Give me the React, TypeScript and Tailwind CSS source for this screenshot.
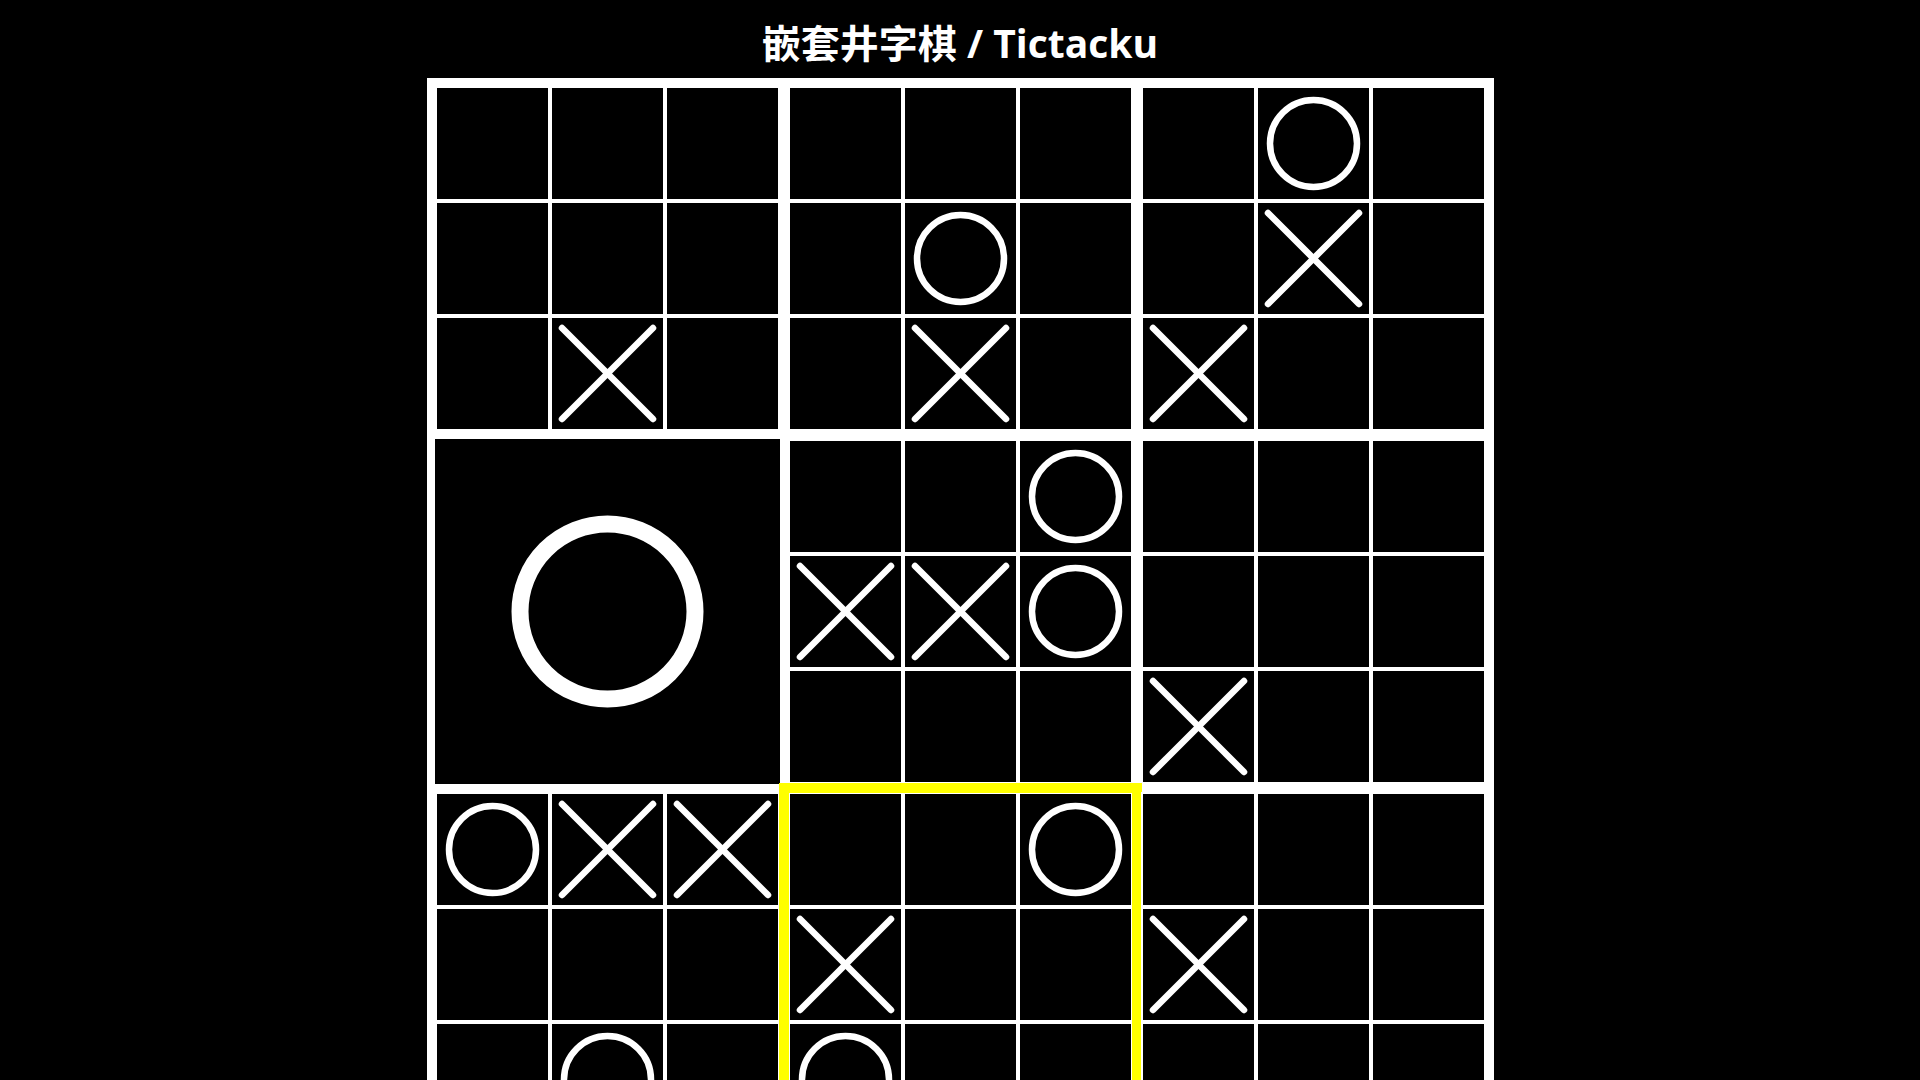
import React from "react";

type Mark = "" | "X" | "O";
type Mini = { won?: Mark; cells: Mark[]; active?: boolean };

const boards: Mini[] = [
  { cells: ["", "", "", "", "", "", "", "X", ""] },
  { cells: ["", "", "", "", "O", "", "", "X", ""] },
  { cells: ["", "O", "", "", "X", "", "X", "", ""] },
  { won: "O", cells: ["", "", "", "", "", "", "", "", ""] },
  { cells: ["", "", "O", "X", "X", "O", "", "", ""] },
  { cells: ["", "", "", "", "", "", "X", "", ""] },
  { cells: ["O", "X", "X", "", "", "", "", "O", ""] },
  { cells: ["", "", "O", "X", "", "", "O", "", ""], active: true },
  { cells: ["", "", "", "X", "", "", "", "", ""] },
];

function XMark() {
  return (
    <svg width="111" height="111" viewBox="0 0 111 111" className="block">
      <line x1="10" y1="10" x2="101" y2="101" stroke="#fff" strokeWidth="6.5" strokeLinecap="round" />
      <line x1="101" y1="10" x2="10" y2="101" stroke="#fff" strokeWidth="6.5" strokeLinecap="round" />
    </svg>
  );
}

function OMark() {
  return (
    <svg width="111" height="111" viewBox="0 0 111 111" className="block">
      <circle cx="55.5" cy="55.5" r="43.5" fill="none" stroke="#fff" strokeWidth="6.5" />
    </svg>
  );
}

function BigO() {
  return (
    <svg width="345" height="345" viewBox="0 0 345 345" className="block">
      <circle cx="172.5" cy="172.5" r="87.5" fill="none" stroke="#fff" strokeWidth="17" />
    </svg>
  );
}

function Cell({ m }: { m: Mark }) {
  return (
    <div className="w-[115px] h-[115px] border-2 border-white bg-black">
      {m === "X" ? <XMark /> : m === "O" ? <OMark /> : null}
    </div>
  );
}

function MiniBoard({ b }: { b: Mini }) {
  if (b.won === "O") {
    return (
      <div className="w-[345px] h-[345px] bg-black">
        <BigO />
      </div>
    );
  }
  return (
    <div
      className={
        b.active
          ? "w-[345px] h-[345px] grid grid-cols-3 outline-[10px] outline-solid outline-[#ffff00] outline-offset-[-1px]"
          : "w-[345px] h-[345px] grid grid-cols-3"
      }
    >
      {b.cells.map((m, i) => (
        <Cell key={i} m={m} />
      ))}
    </div>
  );
}

export default function App() {
  return (
    <div className="w-screen h-screen overflow-hidden bg-black flex flex-col items-center">
      <h1
        className="shrink-0 h-[78px] pt-[6px] flex items-center justify-center text-white font-bold text-[39px] leading-none"
        style={{ fontFamily: '"Open Sans", "Noto Sans CJK SC", sans-serif' }}
      >
        嵌套井字棋 / Tictacku
      </h1>
      <div className="shrink-0 w-[1067px] bg-white p-[8px] grid grid-cols-3 gap-[8px]">
        {boards.map((b, i) => (
          <MiniBoard key={i} b={b} />
        ))}
      </div>
    </div>
  );
}
